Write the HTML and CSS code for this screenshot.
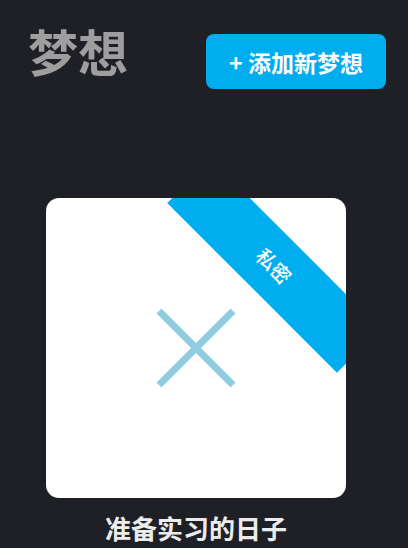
FILE: index.html
```html
<!DOCTYPE html>
<html lang="zh">
<head>
<meta charset="utf-8">
<link rel="stylesheet" href="styles.css">
</head>
<body>
<div class="page">
  <header class="header">
    <h1 class="title">梦想</h1>
    <button class="add-btn">+ 添加新梦想</button>
  </header>
  <section class="dream">
    <div class="card">
      <svg class="x-icon" width="80" height="80" viewBox="0 0 80 80">
        <path d="M3 3 L77 77 M77 3 L3 77" stroke="#90cde0" stroke-width="7" fill="none"/>
      </svg>
      <div class="ribbon">私密</div>
    </div>
    <div class="caption">准备实习的日子</div>
  </section>
</div>
</body>
</html>
```

FILE: styles.css
```css
* { box-sizing: border-box; }
html, body {
  margin: 0;
  padding: 0;
  background: #1f2026;
  height: 100%;
  overflow: hidden;
}
body {
  font-family: "Noto Sans CJK SC", "Noto Sans", sans-serif;
}
.page {
  width: 408px;
  height: 548px;
}
.header {
  display: flex;
  justify-content: space-between;
  align-items: flex-start;
  padding: 18px 22px 0 28px;
}
.title {
  margin: 0;
  font-size: 50px;
  font-weight: 700;
  line-height: 64px;
  color: #9e9e9e;
}
.add-btn {
  margin-top: 16px;
  width: 180px;
  height: 55px;
  border: none;
  border-radius: 8px;
  background: #00aeef;
  color: #ffffff;
  font-family: "Noto Sans CJK SC", "Noto Sans", sans-serif;
  font-size: 23px;
  font-weight: 700;
  padding: 0;
}
.dream {
  margin-top: 109px;
  padding-left: 46px;
  width: 346px;
  display: flex;
  flex-direction: column;
  align-items: center;
}
.card {
  position: relative;
  width: 300px;
  height: 300px;
  background: #ffffff;
  border-radius: 13px;
  overflow: hidden;
  display: flex;
  align-items: center;
  justify-content: center;
}
.x-icon {
  display: block;
}
.ribbon {
  position: absolute;
  left: 108px;
  top: 37px;
  width: 240px;
  height: 62px;
  background: #00aeef;
  color: #ffffff;
  font-size: 20px;
  font-weight: 500;
  line-height: 62px;
  text-align: center;
  transform: rotate(45deg);
}
.caption {
  margin-top: 12px;
  font-size: 26px;
  font-weight: 700;
  color: #ececec;
  line-height: 36px;
}
```
